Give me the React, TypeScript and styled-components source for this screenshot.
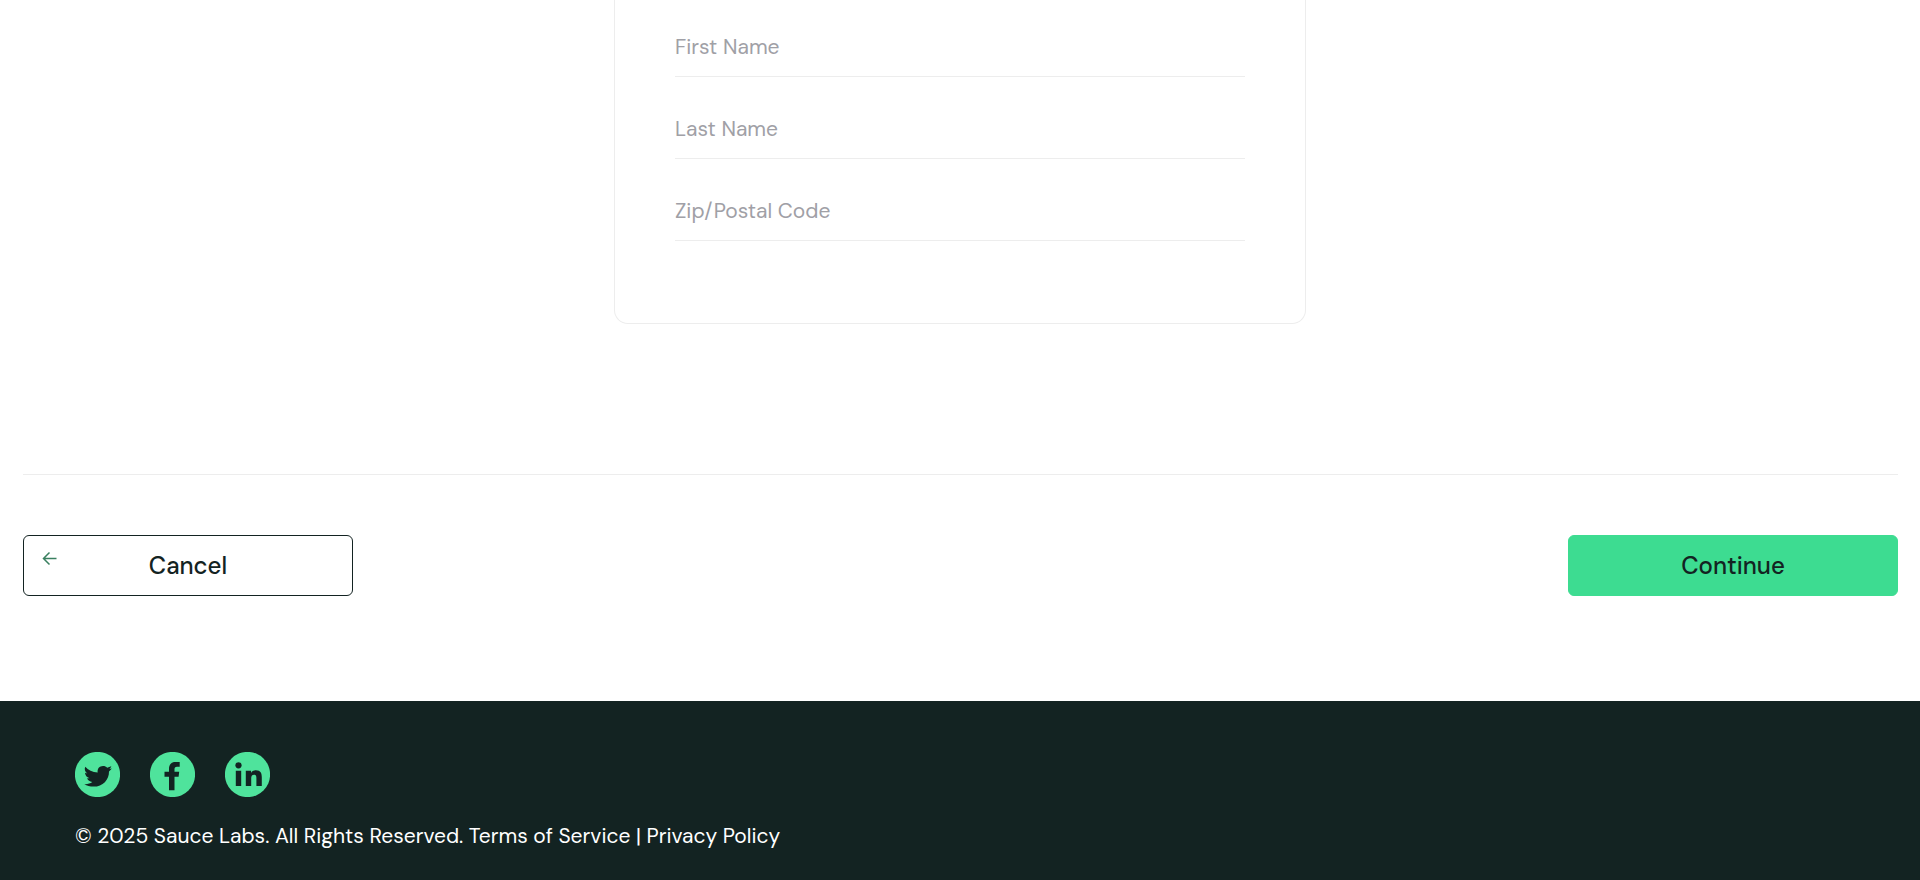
import React from "react";
import styled, { createGlobalStyle } from "styled-components";

const GlobalStyle = createGlobalStyle`
  *, *::before, *::after { box-sizing: border-box; }
  body {
    margin: 0;
    background: #fff;
    color: #132322;
    font-family: "DM Sans", Inter, "Liberation Sans", sans-serif;
  }
`;

const Page = styled.div`
  display: flex;
  flex-direction: column;
  min-height: 100vh;
`;

const Card = styled.div`
  display: flex;
  flex-direction: column;
  gap: 30px;
  max-width: 692px;
  margin: 0 auto 150px;
  padding: 25px 60px 82px;
  border: 1px solid #ededed;
  border-top: 0;
  border-radius: 0 0 14px 14px;
`;

const Field = styled.input`
  width: 100%;
  height: 52px;
  padding: 0 0 8px;
  border: 0;
  border-bottom: 1px solid #ededed;
  border-radius: 0;
  background: transparent;
  color: #132322;
  font-family: inherit;
  font-size: 21px;
  outline: none;

  &::placeholder {
    color: #a0a0a6;
    opacity: 1;
  }
`;

const Actions = styled.div`
  display: flex;
  justify-content: space-between;
  gap: 24px;
  margin: 0 22px 0 23px;
  padding: 60px 0 105px;
  border-top: 1px solid #ededed;
`;

const Button = styled.button<{ $primary?: boolean }>`
  position: relative;
  width: 330px;
  height: 61px;
  padding: 0;
  border: 1px solid ${(p) => (p.$primary ? "#3ddc91" : "#132322")};
  border-radius: 6px;
  background: ${(p) => (p.$primary ? "#3ddc91" : "#fff")};
  color: #132322;
  font-family: inherit;
  font-size: 24px;
  font-weight: 500;
  cursor: pointer;
`;

const BackArrow = styled.svg`
  position: absolute;
  top: 15px;
  left: 18px;
  width: 15px;
  height: 15px;
`;

const Footer = styled.footer`
  flex: 1;
  padding: 51px 75px 29px;
  background: #132322;
  color: #fff;
`;

const SocialList = styled.ul`
  display: flex;
  gap: 30px;
  margin: 0 0 25px;
  padding: 0;
  list-style: none;
`;

const SocialLink = styled.a`
  display: block;
  width: 45px;
  height: 45px;

  svg { display: block; }
`;

const Copy = styled.p`
  margin: 0;
  font-size: 21px;
  line-height: 28px;
`;

const Twitter = () => (
  <path d="M10.300 14.800C13 18 17.500 20.300 22.700 20.600C22 16.800 24.500 14 28 14C29.800 14 31.200 14.700 32.200 15.700L36.300 14.300C35.900 15.600 35.200 16.400 34.300 17L36.800 16.500C36 17.700 35.100 18.600 34 19.400C34.200 27.500 28 34.600 18.500 34.600C15 34.600 11.800 33.700 9.300 32.200C12.500 32.400 15.200 31.500 17.300 30C14.700 29.800 12.900 28.400 12.100 26.300L14.500 26.200C11.800 25.400 10.200 23.400 10 20.800L12.300 21.400C9.900 19.700 9.100 17.200 10.300 14.800Z" />
);
const Facebook = () => (
  <path d="M19 38.300V24.700H14.500V19.800H19V17C19 12.300 21.500 10 25.500 10H29.700V14.700H27C25 14.700 24.500 15.700 24.500 17.300V19.800H29.200L28.600 24.700H24.500V38.300Z" />
);
const LinkedIn = () => (
  <>
    <circle cx="13.500" cy="13.300" r="3.100" />
    <path d="M10.800 18.800h5.400V34h-5.400zM20.800 18.800h5.200v2.100c.8-1.400 2.400-2.600 4.900-2.600 4.800 0 5.900 3 5.900 7.300V34h-5.400v-7.500c0-2-.2-3.700-2.300-3.700-2.300 0-2.900 1.600-2.900 3.700V34h-5.400z" />
  </>
);

const socials = [
  { name: "Twitter", href: "https://twitter.com/saucelabs", Glyph: Twitter },
  { name: "Facebook", href: "https://www.facebook.com/saucelabs", Glyph: Facebook },
  { name: "LinkedIn", href: "https://www.linkedin.com/company/sauce-labs/", Glyph: LinkedIn },
];

const fields = [
  { id: "first-name", label: "First Name" },
  { id: "last-name", label: "Last Name" },
  { id: "postal-code", label: "Zip/Postal Code" },
];

export default function App() {
  return (
    <Page>
      <GlobalStyle />
      <form onSubmit={(e: React.FormEvent) => e.preventDefault()}>
        <Card>
          {fields.map((f) => (
            <Field key={f.id} id={f.id} name={f.id} type="text" placeholder={f.label} aria-label={f.label} />
          ))}
        </Card>
        <Actions>
          <Button type="button">
            <BackArrow viewBox="0 0 15 15" fill="none" stroke="#3a8060" strokeWidth="1.5" aria-hidden="true">
              <path d="M14.500 7.500H1.500M7.500 1.500L1.500 7.500L7.500 13.500" />
            </BackArrow>
            Cancel
          </Button>
          <Button type="submit" $primary>
            Continue
          </Button>
        </Actions>
      </form>
      <Footer>
        <SocialList>
          {socials.map(({ name, href, Glyph }) => (
            <li key={name}>
              <SocialLink href={href} aria-label={name}>
                <svg viewBox="0 0 45 45" width="45" height="45" fill="#132322" aria-hidden="true">
                  <circle cx="22.500" cy="22.500" r="22.600" fill="#4fe39c" />
                  <Glyph />
                </svg>
              </SocialLink>
            </li>
          ))}
        </SocialList>
        <Copy>© 2025 Sauce Labs. All Rights Reserved. Terms of Service | Privacy Policy</Copy>
      </Footer>
    </Page>
  );
}
